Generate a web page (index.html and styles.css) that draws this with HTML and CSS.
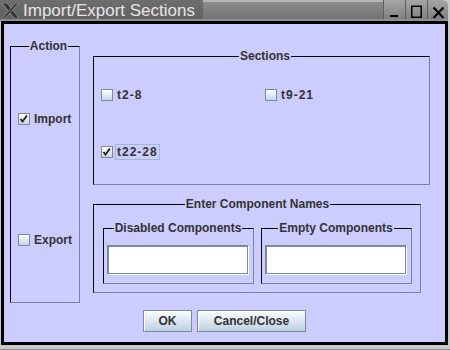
FILE: index.html
```html
<!DOCTYPE html>
<html>
<head>
<meta charset="utf-8">
<link rel="stylesheet" href="styles.css">
</head>
<body>
<div class="titlebar">
  <div class="title-tab">
    <svg class="app-icon" viewBox="0 0 17 15" width="17" height="15">
      <polygon points="0,0 5,0 17,15 12,15" fill="#333" stroke="#a0a0a0" stroke-width="0.7"/>
      <polygon points="13.5,0 16.5,0 3.5,15 0.5,15" fill="#333" stroke="#a0a0a0" stroke-width="0.7"/>
    </svg>
    <span class="title-text">Import/Export Sections</span>
  </div>
  <div class="title-fill"></div>
  <div class="wm-buttons">
    <div class="wm-btn">
      <svg viewBox="0 0 21 19" width="21" height="19"><rect x="6" y="15" width="8" height="2" fill="#000"/></svg>
    </div>
    <div class="wm-btn">
      <svg viewBox="0 0 21 19" width="21" height="19"><rect x="5.75" y="6.25" width="9.5" height="11" fill="none" stroke="#000" stroke-width="1.5"/></svg>
    </div>
    <div class="wm-btn wm-close">
      <svg viewBox="0 0 20 19" width="20" height="19"><path d="M5.5 7.5 L15.5 18 M15.5 7.5 L5.5 18" stroke="#000" stroke-width="2" fill="none"/></svg>
    </div>
  </div>
</div>
<div class="frame">
  <div class="main-row">
    <fieldset class="group action">
      <legend>Action</legend>
      <label class="check">
        <span class="box"><svg viewBox="0 0 10 10" width="10" height="10"><polyline points="1.5,5 3.5,7.5 8,1.5" fill="none" stroke="#1e1e1e" stroke-width="1.8"/></svg></span>
        <span class="lbl">Import</span>
      </label>
      <label class="check">
        <span class="box"></span>
        <span class="lbl">Export</span>
      </label>
    </fieldset>
    <div class="right-col">
      <fieldset class="group sections">
        <legend>Sections</legend>
        <label class="check">
          <span class="box"></span>
          <span class="lbl digits">t2-8</span>
        </label>
        <label class="check">
          <span class="box"></span>
          <span class="lbl digits">t9-21</span>
        </label>
        <label class="check">
          <span class="box"><svg viewBox="0 0 10 10" width="10" height="10"><polyline points="1.5,5 3.5,7.5 8,1.5" fill="none" stroke="#1e1e1e" stroke-width="1.8"/></svg></span>
          <span class="lbl digits focused">t22-28</span>
        </label>
      </fieldset>
      <fieldset class="group names">
        <legend>Enter Component Names</legend>
        <fieldset class="group sub">
          <legend>Disabled Components</legend>
          <input class="field" type="text">
        </fieldset>
        <fieldset class="group sub">
          <legend>Empty Components</legend>
          <input class="field" type="text">
        </fieldset>
      </fieldset>
    </div>
  </div>
  <div class="buttons">
    <button class="btn btn-ok">OK</button>
    <button class="btn btn-cancel">Cancel/Close</button>
  </div>
</div>
<div class="desk"></div>
</body>
</html>
```
FILE: styles.css
```css
html, body {
  margin: 0;
  padding: 0;
}
body {
  width: 450px;
  height: 350px;
  overflow: hidden;
  background: #c9c9c9;
  font-family: "Liberation Sans", Arial, sans-serif;
}

/* title bar */
.titlebar {
  display: flex;
  width: 448px;
  height: 21px;
  background: linear-gradient(#b6b6b6 0, #b6b6b6 2px, #8c8c8c 2px, #737373 19px, #8e8e8e 19px, #8e8e8e 21px);
  border-top-right-radius: 6px;
}
.title-tab {
  display: flex;
  align-items: flex-start;
  width: 203px;
  height: 19px;
  background: linear-gradient(#6e6e6e, #616161);
}
.app-icon {
  display: block;
  margin: 3px 0 0 2px;
}
.title-text {
  margin-left: 4px;
  padding-top: 1px;
  font-size: 17px;
  line-height: 19px;
  color: #e6e6e6;
  white-space: nowrap;
}
.title-fill {
  flex: 1;
}
.wm-buttons {
  display: flex;
  height: 19px;
}
.wm-btn {
  width: 21px;
  height: 19px;
  border-left: 1px solid #5e5e5e;
  background: linear-gradient(#a6a6a6, #808080);
}
.wm-btn svg {
  display: block;
}
.wm-close {
  width: 20px;
  border-top-right-radius: 6px;
}

/* window frame */
.frame {
  margin-left: 1px;
  width: 441px;
  height: 318px;
  border: 3px solid #000;
  background: #ccccff;
}
.desk {
  height: 4px;
  border-bottom: 1px solid #8e8e8e;
}

.main-row {
  display: flex;
  align-items: flex-start;
  height: 264px;
  padding: 15px 0 0 6px;
}

/* titled groups */
.group {
  box-sizing: border-box;
  margin: 0;
  min-inline-size: 0;
  border: 1px solid;
  border-color: #000 #80809f #80809f #000;
}
.group > legend {
  margin: 0 auto;
  padding: 0 1px;
  font-size: 12px;
  font-weight: bold;
  line-height: 14px;
  color: #333;
  white-space: nowrap;
}

.action {
  width: 70px;
  height: 264px;
  margin-right: 13px;
  padding: 6px 0 2px 7px;
  display: grid;
  grid-template-rows: 1fr 1fr;
}
.right-col {
  display: block;
  margin-top: 10px;
}
.sections {
  width: 337px;
  height: 136px;
  padding: 3px 0 3px 7px;
  display: grid;
  grid-template-columns: 164px 1fr;
  grid-template-rows: 57.5px 57.5px;
}
.names {
  width: 328px;
  height: 96px;
  margin-top: 12px;
  padding: 10px 8px 8px 9px;
  display: flex;
  gap: 7px;
}
.sub {
  width: 151px;
  height: 63px;
  padding: 10px 4px 8px 3px;
}
.field {
  display: block;
  box-sizing: border-box;
  width: 142px;
  height: 30px;
  margin: 0;
  padding: 0;
  background: #fff;
  border: 1px solid #7b8b9e;
  border-right-color: #fff;
  border-bottom-color: #fff;
  box-shadow: inset 1px 1px 0 #7b8b9e, inset -1px -1px 0 #7b8b9e;
  outline: none;
}

/* check boxes */
.check {
  display: flex;
  align-items: center;
}
.box {
  box-sizing: border-box;
  width: 12px;
  height: 12px;
  margin-right: 2px;
  border: 1px solid #7a8a99;
  background: linear-gradient(#ffffff, #c4d6e8);
}
.box svg {
  display: block;
}
.lbl {
  border: 1px solid transparent;
  padding: 0 1px;
  font-size: 12px;
  font-weight: bold;
  line-height: 14px;
  color: #333;
  white-space: nowrap;
}
.digits {
  letter-spacing: 1px;
}
.focused {
  border-color: #a3b8cc;
}

/* buttons */
.buttons {
  display: flex;
  justify-content: center;
  gap: 5px;
  margin-top: 7px;
}
.btn {
  box-sizing: border-box;
  height: 22px;
  padding: 0;
  border: 1px solid #7a8a99;
  background: linear-gradient(#fbfcfd, #dde7f1 50%, #bdd0e3);
  box-shadow: inset 1px 1px 0 #fff;
  font: bold 12px "Liberation Sans", Arial, sans-serif;
  color: #333;
}
.btn-ok {
  width: 49px;
}
.btn-cancel {
  width: 109px;
}
```
